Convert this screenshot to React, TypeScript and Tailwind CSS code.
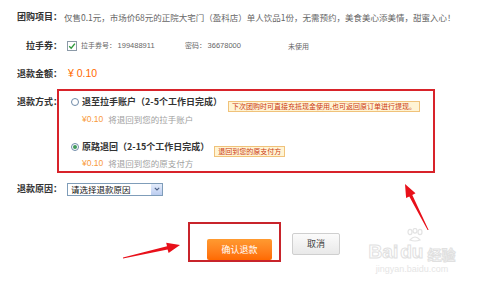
import React from 'react'

const CJK = "font-['Noto_Sans_CJK_SC',sans-serif]"
const NUM = "font-['Liberation_Sans','Noto_Sans_CJK_SC',sans-serif]"

function Label({ children }: { children: React.ReactNode }) {
  return (
    <div className="w-[46px] shrink-0 text-right text-[9px] leading-[14px] font-bold text-[#333]">
      {children}
    </div>
  )
}

function Tip({ children }: { children: React.ReactNode }) {
  return (
    <span className="inline-block h-[11px] px-[3px] text-[7px] leading-[9px] text-[#cc3a12] bg-[#fff4d4] border border-[#f0c27a] whitespace-nowrap">
      {children}
    </span>
  )
}

function Radio({ checked }: { checked?: boolean }) {
  return (
    <span className="w-[8px] h-[8px] rounded-full border border-[#6f8aa8] bg-white flex items-center justify-center shrink-0">
      {checked && <span className="w-[4px] h-[4px] rounded-full bg-[#3f9a5a]" />}
    </span>
  )
}

function Arrows() {
  return (
    <svg className="absolute inset-0 pointer-events-none" width="480" height="286" viewBox="0 0 480 286">
      <polygon
        fill="#e8101a"
        points="123,258.6 167.6,249.6 168.6,253 180,245 166.2,242.8 167,246.2 123,257.6"
      />
      <polygon
        fill="#e8101a"
        points="428.6,230 412.3,195 415.5,193.2 405,184 406.1,198 409.3,196.4 427.6,230"
      />
    </svg>
  )
}

function Watermark() {
  return (
    <div className="absolute left-[366px] top-[228px] w-[92px] flex flex-col items-center pointer-events-none opacity-70">
      <svg width="22" height="14" viewBox="0 0 22 14" className="ml-[6px]">
        <g fill="none" stroke="#d8d8d8" strokeWidth="1.2">
          <ellipse cx="6" cy="4" rx="2" ry="2.6" />
          <ellipse cx="11" cy="2.8" rx="2" ry="2.4" />
          <ellipse cx="16" cy="4" rx="2" ry="2.6" />
          <path d="M6 12 Q11 6 16 12 Q11 14 6 12 Z" />
        </g>
      </svg>
      <div className="flex items-end leading-none">
        <span className={`${NUM} text-[19px] font-bold text-white [-webkit-text-stroke:1px_#d4d4d4]`}>Bai</span>
        <span className={`${NUM} text-[19px] font-bold text-white [-webkit-text-stroke:1px_#d4d4d4] ml-[2px]`}>du</span>
        <span className={`${CJK} text-[14px] font-bold text-white [-webkit-text-stroke:1px_#d4d4d4] ml-[4px]`}>经验</span>
      </div>
      <div className={`${NUM} text-[9px] leading-[12px] mt-[2px] text-[#dadada]`}>jingyan.baidu.com</div>
    </div>
  )
}

export default function App() {
  return (
    <div className={`${CJK} relative w-[480px] h-[286px] bg-white overflow-hidden pl-[16px] pt-[10px]`}>
      {/* 团购项目 */}
      <div className="flex h-[14px] items-center">
        <Label>团购项目：</Label>
        <div className="ml-[2px] text-[8.5px] leading-[14px] text-[#666] whitespace-nowrap">
          仅售0.1元，市场价68元的正院大宅门（盈科店）单人饮品1份，无需预约，美食美心添美情，甜蜜入心！
        </div>
      </div>

      {/* 拉手券 */}
      <div className="flex h-[14px] items-center mt-[15px]">
        <Label>拉手券：</Label>
        <span className="ml-[5px] w-[10px] h-[10px] border border-[#8c9aa8] bg-white flex items-center justify-center">
          <svg width="8" height="8" viewBox="0 0 8 8">
            <path d="M1.2 4.2 L3.2 6.2 L6.9 1.6" fill="none" stroke="#2f9a3c" strokeWidth="1.4" />
          </svg>
        </span>
        <div className="flex items-center text-[7px] text-[#666] ml-[4px]">
          <span className="w-[104px] whitespace-nowrap">
            拉手券号： <span className={`${NUM} text-[7.5px]`}>199488911</span>
          </span>
          <span className="w-[103px] whitespace-nowrap">
            密码： <span className={`${NUM} text-[7.5px]`}>36678000</span>
          </span>
          <span>未使用</span>
        </div>
      </div>

      {/* 退款金额 */}
      <div className="flex h-[14px] items-center mt-[14px]">
        <Label>退款金额：</Label>
        <div className={`${NUM} ml-[6px] text-[10.5px] text-[#ff6a00]`}>¥ 0.10</div>
      </div>

      {/* 退款方式 */}
      <div className="flex items-start mt-[8px]">
        <div className="mt-[6px]">
          <Label>退款方式：</Label>
        </div>
        <div className="ml-[-5px] w-[378px] h-[84px] border-2 border-[#d8232a] pl-[12px] pt-[4px]">
          <div className="flex items-center h-[14px]">
            <Radio />
            <span className="ml-[3px] text-[9px] font-bold text-[#333] whitespace-nowrap">退至拉手账户（2-5个工作日完成）</span>
            <span className="ml-[6px]"><Tip>下次团购时可直接充抵现金使用,也可返回原订单进行提现。</Tip></span>
          </div>
          <div className="flex items-center h-[14px] mt-[3px] pl-[11px] text-[8.5px] whitespace-nowrap">
            <span className={`${NUM} text-[#f99a3a]`}>¥0.10</span>
            <span className="ml-[5px] text-[#a0a0a0]">将退回到您的拉手账户</span>
          </div>
          <div className="flex items-center h-[14px] mt-[14px]">
            <Radio checked />
            <span className="ml-[3px] text-[9px] font-bold text-[#333] whitespace-nowrap">原路退回（2-15个工作日完成）</span>
            <span className="ml-[5px]"><Tip>退回到您的原支付方</Tip></span>
          </div>
          <div className="flex items-center h-[14px] mt-[2px] pl-[11px] text-[8.5px] whitespace-nowrap">
            <span className={`${NUM} text-[#f99a3a]`}>¥0.10</span>
            <span className="ml-[5px] text-[#a0a0a0]">将退回到您的原支付方</span>
          </div>
        </div>
      </div>

      {/* 退款原因 */}
      <div className="flex h-[14px] items-center mt-[9px]">
        <Label>退款原因：</Label>
        <div className="ml-[5px] w-[96px] h-[13px] border border-[#7f9db9] bg-white flex items-center">
          <span className="flex-1 pl-[3px] text-[8.5px] leading-[11px] text-[#111] whitespace-nowrap">请选择退款原因</span>
          <span className="w-[11px] h-[11px] bg-gradient-to-b from-[#e4ecfb] to-[#bccdf0] flex items-center justify-center">
            <svg width="6" height="4" viewBox="0 0 6 4">
              <path d="M0.8 0.8 L3 3 L5.2 0.8" fill="none" stroke="#4d6185" strokeWidth="1.1" />
            </svg>
          </span>
        </div>
      </div>

      {/* 按钮 */}
      <div className="flex items-start mt-[26px] ml-[172px]">
        <div className="w-[93px] h-[40px] border-2 border-[#c8242b] pl-[17px] pt-[10px]">
          <button className="w-[65px] h-[21px] rounded-[2px] bg-gradient-to-b from-[#ff9a30] to-[#ff6a00] text-white text-[9px] leading-[21px]">
            确认退款
          </button>
        </div>
        <button className="ml-[11px] mt-[11px] w-[48px] h-[22px] rounded-[2px] border border-[#cfcfcf] bg-gradient-to-b from-[#fbfbfb] to-[#e9e9e9] text-[#444] text-[9px] leading-[20px]">
          取消
        </button>
      </div>

      <Arrows />
      <Watermark />
    </div>
  )
}
